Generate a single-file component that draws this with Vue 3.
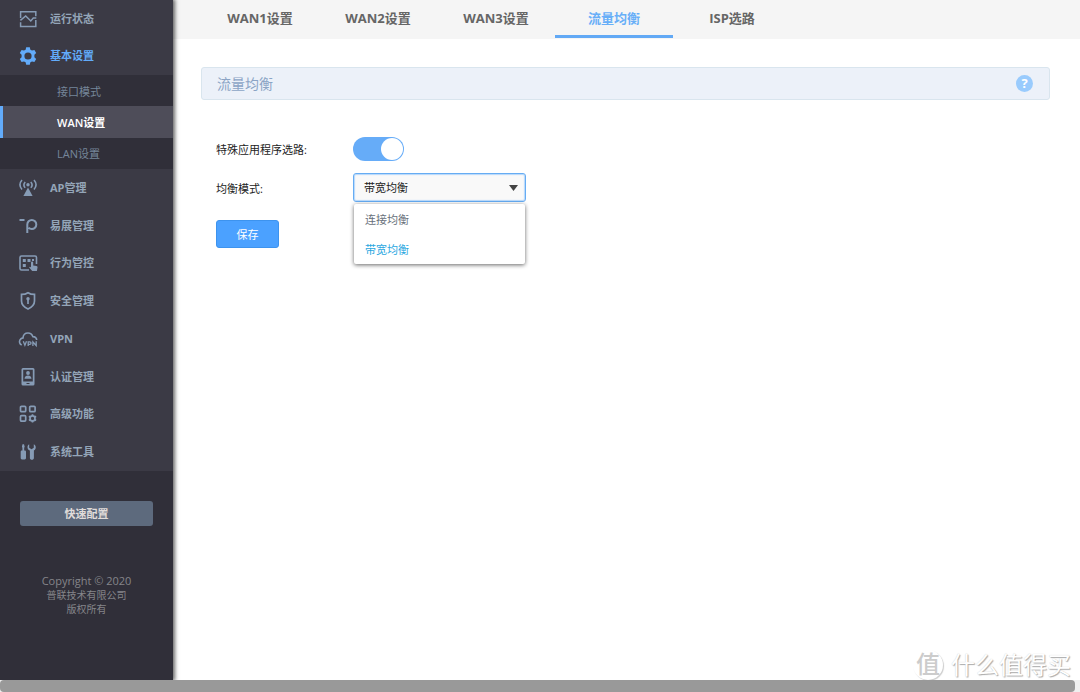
<script setup>
import { ref } from 'vue'

const specialRouting = ref(true)
const mode = ref('bandwidth')
const modes = [
  { value: 'connection', label: '连接均衡' },
  { value: 'bandwidth', label: '带宽均衡' },
]
const tabs = ['WAN1设置', 'WAN2设置', 'WAN3设置', '流量均衡', 'ISP选路']
const activeTab = ref('流量均衡')
const subItems = ['接口模式', 'WAN设置', 'LAN设置']
const activeSub = ref('WAN设置')
</script>

<template>
  <div class="app">
    <div class="body">
      <aside class="sidebar">
        <nav class="menu">
          <div class="group group-top">
            <a class="item" href="#status">
              <svg class="icon" viewBox="0 0 20 20" fill="none" stroke="currentColor" stroke-width="1.5">
                <path d="M2.6 9V2.7h15.2v4.6M2.6 13.2v4.3h15.2v-6.6" />
                <path d="M2.4 11.4 7.7 6.9l5.1 5.1 2.5-3h3" />
              </svg>
              运行状态
            </a>
            <a class="item current" href="#basic">
              <svg class="icon" viewBox="0 0 20 20">
                <path fill="currentColor" fill-rule="evenodd" d="M8.2 1.300h3.600l.6 2.400 1.600.9 2.400-.7 1.800 3.100-1.800 1.700v2.600l1.800 1.700-1.800 3.100-2.400-.7-1.600.9-.6 2.400H8.200l-.6-2.400-1.600-.9-2.400.7-1.800-3.100 1.800-1.700V8.700L1.800 7l1.800-3.100 2.400.7 1.600-.9zM10 6.400a3.600 3.600 0 1 0 0 7.200 3.600 3.600 0 0 0 0-7.200z" />
              </svg>
              基本设置
            </a>
          </div>
          <div class="submenu">
            <a
              v-for="s in subItems"
              :key="s"
              class="subitem"
              :class="{ active: s === activeSub }"
              href="#basic"
              @click.prevent="activeSub = s"
            >{{ s }}</a>
          </div>
          <div class="group group-rest">
            <a class="item" href="#ap">
              <svg class="icon" viewBox="0 0 20 20" fill="none" stroke="currentColor" stroke-width="1.6">
                <path d="M4 2C1.400 5 1.400 8.500 4 11.500M16 2c2.600 3 2.600 6.500 0 9.500M7.200 4C5.400 6 5.400 7.800 7.200 9.800M12.800 4c1.800 2 1.800 3.800 0 5.800" />
                <circle cx="10" cy="6.700" r="1.700" fill="currentColor" stroke="none" />
                <path d="M10 9.600 14.600 18H5.400z" fill="currentColor" stroke="none" />
              </svg>
              AP管理
            </a>
            <a class="item" href="#easy">
              <svg class="icon" viewBox="0 0 20 20" fill="none" stroke="currentColor" stroke-width="2">
                <path d="M1.500 4h5M9.300 17V8.500a4.500 4.500 0 1 1 4.500 4.500c-1.400 0-2.500-.4-3.300-1.200" />
              </svg>
              易展管理
            </a>
            <a class="item" href="#behavior">
              <svg class="icon" viewBox="0 0 20 20" fill="currentColor">
                <path d="M11 17H3.500A1.500 1.500 0 0 1 2 15.500v-11A1.500 1.500 0 0 1 3.500 3H17a1.500 1.500 0 0 1 1.500 1.500V11" fill="none" stroke="currentColor" stroke-width="1.600" />
                <path d="M4.800 6h3v3h-3zM9.500 6h3v3h-3zM14 6h2v2h-2zM4.800 11h3v3h-3z" />
                <path d="M13 9.500c0-1.500 2.200-1.500 2.200 0v3l3.300.6c.8.200 1.100.7 1 1.400l-.6 3.500h-4.700l-3-3.400c.3-1 1.100-.9 1.800-.2z" />
              </svg>
              行为管控
            </a>
            <a class="item" href="#security">
              <svg class="icon" viewBox="0 0 20 20" fill="none" stroke="currentColor" stroke-width="1.7">
                <path d="M10 1.700c2 1.300 4.300 1.700 6.500 1.700V10c0 3.700-2.900 6.300-6.500 8-3.600-1.700-6.500-4.300-6.500-8V3.400c2.200 0 4.500-.4 6.500-1.700z" />
                <path d="M10 8v5" />
                <circle cx="10" cy="7.800" r="1.700" fill="currentColor" stroke="none" />
              </svg>
              安全管理
            </a>
            <a class="item" href="#vpn">
              <svg class="icon" viewBox="0 0 20 20" fill="none" stroke="currentColor" stroke-width="1.6">
                <path d="M3.700 16C1.500 15 1 12.700 2 10.900 2.700 9.600 3.700 9 5 8.900 5.200 6 7.300 4 10 4c2.500 0 4.100 1.400 4.800 3.600 2.200.1 3.800 1.400 3.900 3.400" />
                <path d="m5.300 12.300 1.600 4L8.500 12.300M10.200 17v-4.200h1.500c1.800 0 1.800 2.500 0 2.500h-1.500M14.900 17v-4l3.300 3.500v-4.200" stroke-width="1.300" />
              </svg>
              VPN
            </a>
            <a class="item" href="#auth">
              <svg class="icon" viewBox="0 0 20 20" fill="currentColor">
                <path fill-rule="evenodd" d="M5 1h10a1.500 1.500 0 0 1 1.500 1.500v14.500a1.500 1.500 0 0 1-1.500 1.500H5A1.500 1.500 0 0 1 3.500 17V2.500A1.500 1.500 0 0 1 5 1zm.2 1.700v11.800h9.600V2.700zM8.500 16v1h3v-1z" />
                <circle cx="10" cy="6" r="1.900" />
                <path d="M6.500 11.700c.2-2.200 1.600-3.100 3.500-3.100s3.300.9 3.500 3.100z" />
              </svg>
              认证管理
            </a>
            <a class="item" href="#advanced">
              <svg class="icon" viewBox="0 0 20 20" fill="none" stroke="currentColor" stroke-width="1.7">
                <rect x="2.500" y="2.300" width="5.200" height="5.400" rx="1" />
                <rect x="11.700" y="2.300" width="5.400" height="5.400" rx="1" />
                <rect x="2.500" y="11.700" width="5.200" height="5.400" rx="1" />
                <circle cx="14.500" cy="14.400" r="2.500" />
                <path d="M14.500 10.300v1.600m0 5v1.600M10.900 12.300l1.500.9m4.200 2.400 1.500.9M18.100 12.300l-1.500.9m-4.200 2.400-1.500.9" />
              </svg>
              高级功能
            </a>
            <a class="item" href="#tools">
              <svg class="icon" viewBox="0 0 20 20" fill="currentColor">
                <path d="M4.500 2.200h1.500l.7 2.600-.5 1v2.700h.5c.8 0 1.300.5 1.300 1.300v6.200c0 .9-.5 1.400-1.300 1.400H4c-.8 0-1.300-.5-1.300-1.400V9.800c0-.8.500-1.300 1.300-1.300h.4V5.800l-.5-1zM11.200 2.200v3.600l2.300 1.400 2.300-1.400V2.200c1.600.7 2.400 2.400 1.800 4.200-.3 1-.9 1.600-1.700 2v7.600c0 1.200-.8 1.800-2 1.800s-2-.6-2-1.800V8.600c-1-.4-1.900-1.200-2.200-2.200-.5-1.800-.1-3.500 1.500-4.200z" />
              </svg>
              系统工具
            </a>
          </div>
        </nav>
        <button class="quick" type="button">快速配置</button>
        <footer class="copyright">
          <p class="latin">Copyright © 2020</p>
          <p>普联技术有限公司</p>
          <p>版权所有</p>
        </footer>
      </aside>

      <main class="main">
        <nav class="tabs">
          <a
            v-for="t in tabs"
            :key="t"
            class="tab"
            :class="{ active: t === activeTab }"
            href="#wan"
            @click.prevent="activeTab = t"
          >{{ t }}</a>
        </nav>
        <section class="content">
          <header class="panel-title">
            <h1>流量均衡</h1>
            <button class="help" type="button" aria-label="帮助">?</button>
          </header>
          <form class="form" @submit.prevent>
            <div class="row row-switch">
              <label for="routing">特殊应用程序选路:</label>
              <input id="routing" v-model="specialRouting" class="switch" type="checkbox" />
            </div>
            <div class="row row-mode">
              <label for="mode">均衡模式:</label>
              <div class="combo">
                <select id="mode" v-model="mode">
                  <option v-for="m in modes" :key="m.value" :value="m.value">{{ m.label }}</option>
                </select>
                <svg class="caret" viewBox="0 0 9 6"><path d="M0 0h9L4.500 6z" fill="#444" /></svg>
                <ul class="options">
                  <li v-for="m in modes" :key="m.value">
                    <button type="button" :class="{ chosen: m.value === mode }" @click="mode = m.value">{{ m.label }}</button>
                  </li>
                </ul>
              </div>
            </div>
            <button class="save" type="submit">保存</button>
          </form>
        </section>
        <div class="watermark">
          <span class="seal">值</span>
          <span>什么值得买</span>
        </div>
      </main>
    </div>
    <div class="scrollbar"><div class="thumb"></div></div>
  </div>
</template>

<style>
body {
  margin: 0;
}
</style>

<style scoped>
.app {
  display: flex;
  flex-direction: column;
  min-height: 100vh;
  background: #fff;
  font-family: "Open Sans", "Noto Sans CJK SC", sans-serif;
  font-size: 11px;
  color: #222;
}
.app * {
  box-sizing: border-box;
}
a {
  text-decoration: none;
}
button,
select {
  font-family: inherit;
  font-size: inherit;
  cursor: pointer;
}
.body {
  display: flex;
  flex: 1;
}
.sidebar {
  position: relative;
  z-index: 1;
  flex: 0 0 173px;
  display: flex;
  flex-direction: column;
  background: #302f39;
  box-shadow: 1px 0 4px 1px rgba(0, 0, 0, 0.6);
}
.group {
  display: grid;
  grid-auto-rows: 1fr;
  background: #3b3a45;
}
.group-top {
  min-height: 75px;
}
.group-rest {
  min-height: 302px;
}
.item {
  display: flex;
  align-items: center;
  gap: 12px;
  padding-left: 18px;
  color: #94a5b8;
  font-weight: 700;
  line-height: 16px;
}
.icon {
  width: 20px;
  height: 20px;
  color: #869bb5;
}
.item.current,
.item.current .icon {
  color: #62abfa;
}
.submenu {
  display: grid;
  grid-auto-rows: 1fr;
  min-height: 94px;
}
.subitem {
  display: flex;
  align-items: center;
  padding-left: 54px;
  border-left: 3px solid transparent;
  color: #75869a;
}
.subitem.active {
  background: #4e4d59;
  border-left-color: #62abfa;
  color: #fff;
  font-weight: 600;
}
.quick {
  margin: 30px 20px 0;
  height: 25px;
  padding: 0 0 2px;
  border: 0;
  border-radius: 3px;
  background: #5d6a7d;
  color: #e0dcda;
  font-weight: 700;
}
.copyright {
  margin-top: 48px;
  text-align: center;
  color: #85858a;
  font-size: 10px;
  line-height: 14px;
}
.copyright p {
  margin: 0;
}
.copyright .latin {
  font-size: 11px;
}
.main {
  position: relative;
  flex: 1;
  min-width: 0;
}
.tabs {
  display: flex;
  height: 39px;
  padding-left: 28px;
  background: #f5f5f5;
}
.tab {
  width: 118px;
  height: 38px;
  border-bottom: 3px solid transparent;
  color: #666;
  font-size: 13px;
  font-weight: 700;
  line-height: 36px;
  text-align: center;
}
.tab.active {
  border-bottom-color: #62a9f5;
  color: #68aff8;
}
.content {
  padding: 28px 30px 0 28px;
}
.panel-title {
  display: flex;
  align-items: center;
  justify-content: space-between;
  height: 33px;
  padding: 0 16px 0 15px;
  border: 1px solid #d9e5ee;
  border-radius: 3px;
  background: #ecf1f9;
}
.panel-title h1 {
  margin: 0;
  padding-bottom: 2px;
  color: #8ba4c5;
  font-size: 14px;
  font-weight: 400;
}
.help {
  width: 17px;
  height: 17px;
  padding: 0;
  border: 0;
  border-radius: 50%;
  background: #99cbfd;
  color: #fff;
  font-size: 13px;
  font-weight: 700;
  line-height: 17px;
}
.form {
  padding: 37px 0 0 15px;
}
.row {
  display: flex;
  align-items: center;
}
.row label {
  width: 137px;
}
.row-mode {
  margin: 12px 0 18px;
}
.switch {
  position: relative;
  appearance: none;
  width: 51px;
  height: 24px;
  margin: 0;
  border-radius: 12px;
  background: #bbb;
  cursor: pointer;
}
.switch::after {
  content: "";
  position: absolute;
  top: 1px;
  left: 1px;
  width: 22px;
  height: 22px;
  border-radius: 50%;
  background: #fff;
}
.switch:checked {
  background: #66acf8;
}
.switch:checked::after {
  left: 28px;
}
.combo {
  position: relative;
  width: 173px;
}
.combo select {
  appearance: none;
  display: block;
  width: 100%;
  height: 29px;
  padding: 0 10px;
  border: 1px solid #66acf3;
  border-radius: 3px;
  background: #f9f9f9;
  box-shadow: inset 0 0 1px 1px #b5d7fb;
  color: #222;
  outline: none;
}
.caret {
  position: absolute;
  top: 12px;
  right: 8px;
  width: 9px;
  height: 6px;
  pointer-events: none;
}
.options {
  position: absolute;
  top: 31px;
  left: 1px;
  width: 171px;
  margin: 0;
  padding: 0;
  border-radius: 2px;
  background: #fff;
  box-shadow: 0 1px 4px rgba(0, 0, 0, 0.6);
  list-style: none;
}
.options button {
  display: block;
  width: 100%;
  height: 30px;
  padding: 0 11px;
  border: 0;
  background: none;
  color: #68707a;
  text-align: left;
}
.options button.chosen {
  color: #2ba7df;
}
.save {
  display: block;
  width: 63px;
  height: 28px;
  padding: 0;
  border: 1px solid #3d93ee;
  border-radius: 3px;
  background: #4ba1ff;
  color: #fff;
}
.watermark {
  position: absolute;
  right: 9px;
  bottom: 0;
  display: flex;
  align-items: center;
  gap: 8px;
  color: #fff;
  font-size: 24px;
  line-height: 30px;
  text-shadow: 1px 1px 1px #aaa, 0 0 1px #ccc;
}
.seal {
  width: 30px;
  height: 30px;
  border-radius: 50%;
  box-shadow: 1px 1px 1px #ccc;
  color: #ccc;
  font-weight: 500;
  line-height: 28px;
  text-align: center;
  text-shadow: none;
}
.scrollbar {
  position: relative;
  z-index: 2;
  height: 12px;
  padding-right: 5px;
  background: #efefef;
}
.thumb {
  height: 12px;
  border-radius: 4px;
  background: #999;
}
</style>
